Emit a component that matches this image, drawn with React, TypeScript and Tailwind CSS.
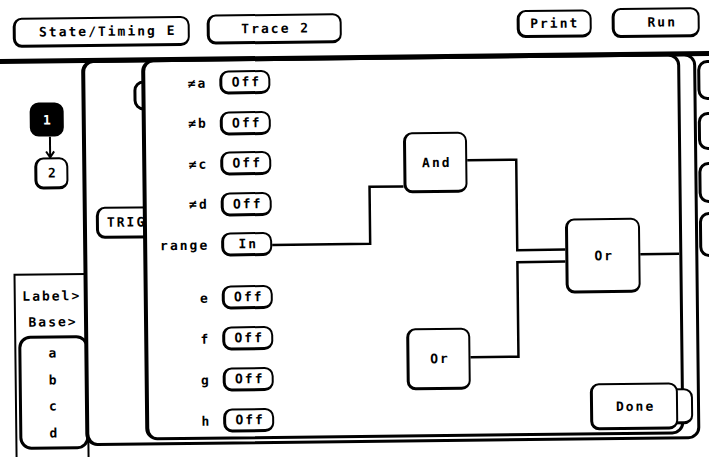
import type { ReactNode } from 'react';

function Key({ children, className = '' }: { children?: ReactNode; className?: string }) {
  return (
    <div
      className={`flex items-center justify-center rounded-[9px] border-2 border-b-[3px] border-l-[3px] border-black bg-white ${className}`}
    >
      {children}
    </div>
  );
}

function Row({ label, value }: { label: string; value: string }) {
  return (
    <div className="flex h-[24px] items-center">
      <span className="w-[62px] text-right">{label}</span>
      <Key className="ml-[12px] h-[24px] w-[51px] pl-[2px]">{value}</Key>
    </div>
  );
}

function Gate({ label, className }: { label: string; className: string }) {
  return <Key className={`absolute pl-[2px] ${className}`}>{label}</Key>;
}

export default function App() {
  return (
    <div className="h-[457px] w-[709px] overflow-hidden bg-white font-['DejaVu_Sans_Mono',monospace] text-[13px] font-bold leading-none tracking-[2px] text-black">
      <div className="relative h-[457px] w-[709px] rotate-[-0.65deg]">
        {/* softkeys */}
        <div className="flex items-start pl-[15px] pt-[11px]">
          <Key className="mt-[3px] h-[30px] w-[177px] pl-[12px]">State/Timing E</Key>
          <Key className="ml-[17px] mt-[2px] h-[30px] w-[135px] pl-[2px]">Trace 2</Key>
          <Key className="ml-[175px] mt-[1px] h-[28px] w-[75px]">Print</Key>
          <Key className="ml-[20px] h-[30px] w-[88px] pl-[12px]">Run</Key>
        </div>

        {/* sequence levels */}
        <div className="absolute left-[31px] top-[99px] flex h-[34px] w-[34px] items-center justify-center rounded-[9px] bg-black pl-[2px] text-white">
          1
        </div>
        <svg className="absolute left-[45px] top-[133px]" width="12" height="22" viewBox="0 0 12 22">
          <path d="M6 0V20M2 15L6 21L10 15" fill="none" stroke="black" strokeWidth="2" />
        </svg>
        <Key className="absolute left-[35px] top-[154px] h-[32px] w-[34px] pl-[2px]">2</Key>

        {/* label / base column */}
        <div className="absolute left-[13px] top-[270px] flex h-[200px] w-[74px] flex-col items-center border-2 border-black bg-white pt-[14px]">
          <span className="pl-[2px]">Label&gt;</span>
          <span className="mt-[13px] pl-[4px]">Base&gt;</span>
          <div className="ml-[2px] mt-[7px] flex h-[114px] w-[70px] flex-col items-center self-start rounded-[12px] border-[3px] border-black pt-[1px]">
            {['a', 'b', 'c', 'd'].map((l) => (
              <span key={l} className="flex h-[28px] items-center">
                {l}
              </span>
            ))}
          </div>
        </div>

        {/* trigger menu behind */}
        <div className="absolute left-[83px] top-[57px] h-[386px] w-[615px] rounded-[12px] border-[3px] border-l-[4px] border-black bg-white">
          <div className="absolute left-[48px] top-[18px] h-[30px] w-[40px] rounded-[10px] border-[3px] border-black" />
          <div className="absolute left-[9px] top-[144px] flex h-[32px] w-[80px] items-center rounded-[9px] border-2 border-b-[3px] border-l-[3px] border-black pl-[8px]">
            TRIG
          </div>
        </div>

        {/* cut-off keys on the right */}
        <div className="absolute left-[699px] top-[64px] h-[40px] w-[40px] rounded-[10px] border-[3px] border-black" />
        <div className="absolute left-[699px] top-[116px] h-[38px] w-[40px] rounded-[10px] border-[3px] border-black" />
        <div className="absolute left-[699px] top-[166px] h-[41px] w-[40px] rounded-[10px] border-[3px] border-black" />
        <div className="absolute left-[699px] top-[216px] h-[45px] w-[40px] rounded-[10px] border-[3px] border-black" />

        {/* term dialog */}
        <div className="absolute left-[143px] top-[57px] h-[381px] w-[539px] rounded-[12px] border-[3px] border-l-[4px] border-black bg-white">
          <div className="flex flex-col pt-[9px]">
            <div className="flex flex-col gap-[16.5px]">
              <Row label="≠a" value="Off" />
              <Row label="≠b" value="Off" />
              <Row label="≠c" value="Off" />
              <Row label="≠d" value="Off" />
              <Row label="range" value="In" />
            </div>
            <div className="mt-[29px] flex flex-col gap-[17px]">
              <Row label="e" value="Off" />
              <Row label="f" value="Off" />
              <Row label="g" value="Off" />
              <Row label="h" value="Off" />
            </div>
          </div>

          {/* wiring */}
          <svg className="absolute left-0 top-0" width="532" height="375" viewBox="0 0 532 375">
            <g fill="none" stroke="black" strokeWidth="2.5">
              <path d="M125 184H223V127H257" />
              <path d="M321 101.5H370V192H418" />
              <path d="M322 298.5H370V204H418" />
              <path d="M493 197.5H532" />
            </g>
          </svg>

          <Gate label="And" className="left-[257px] top-[73px] h-[61px] w-[64px]" />
          <Gate label="Or" className="left-[418px] top-[161px] h-[75px] w-[75px]" />
          <Gate label="Or" className="left-[258px] top-[269px] h-[62px] w-[64px]" />

          <div className="absolute left-[503px] top-[332px] h-[36px] w-[41px] rounded-[9px] border-2 border-b-[3px] border-black bg-white" />
          <Gate label="Done" className="left-[441px] top-[326px] h-[47px] w-[88px]" />
        </div>

        {/* menu rule */}
        <div className="absolute left-[-10px] top-[55px] h-[5px] w-[729px] bg-black" />
      </div>
    </div>
  );
}
